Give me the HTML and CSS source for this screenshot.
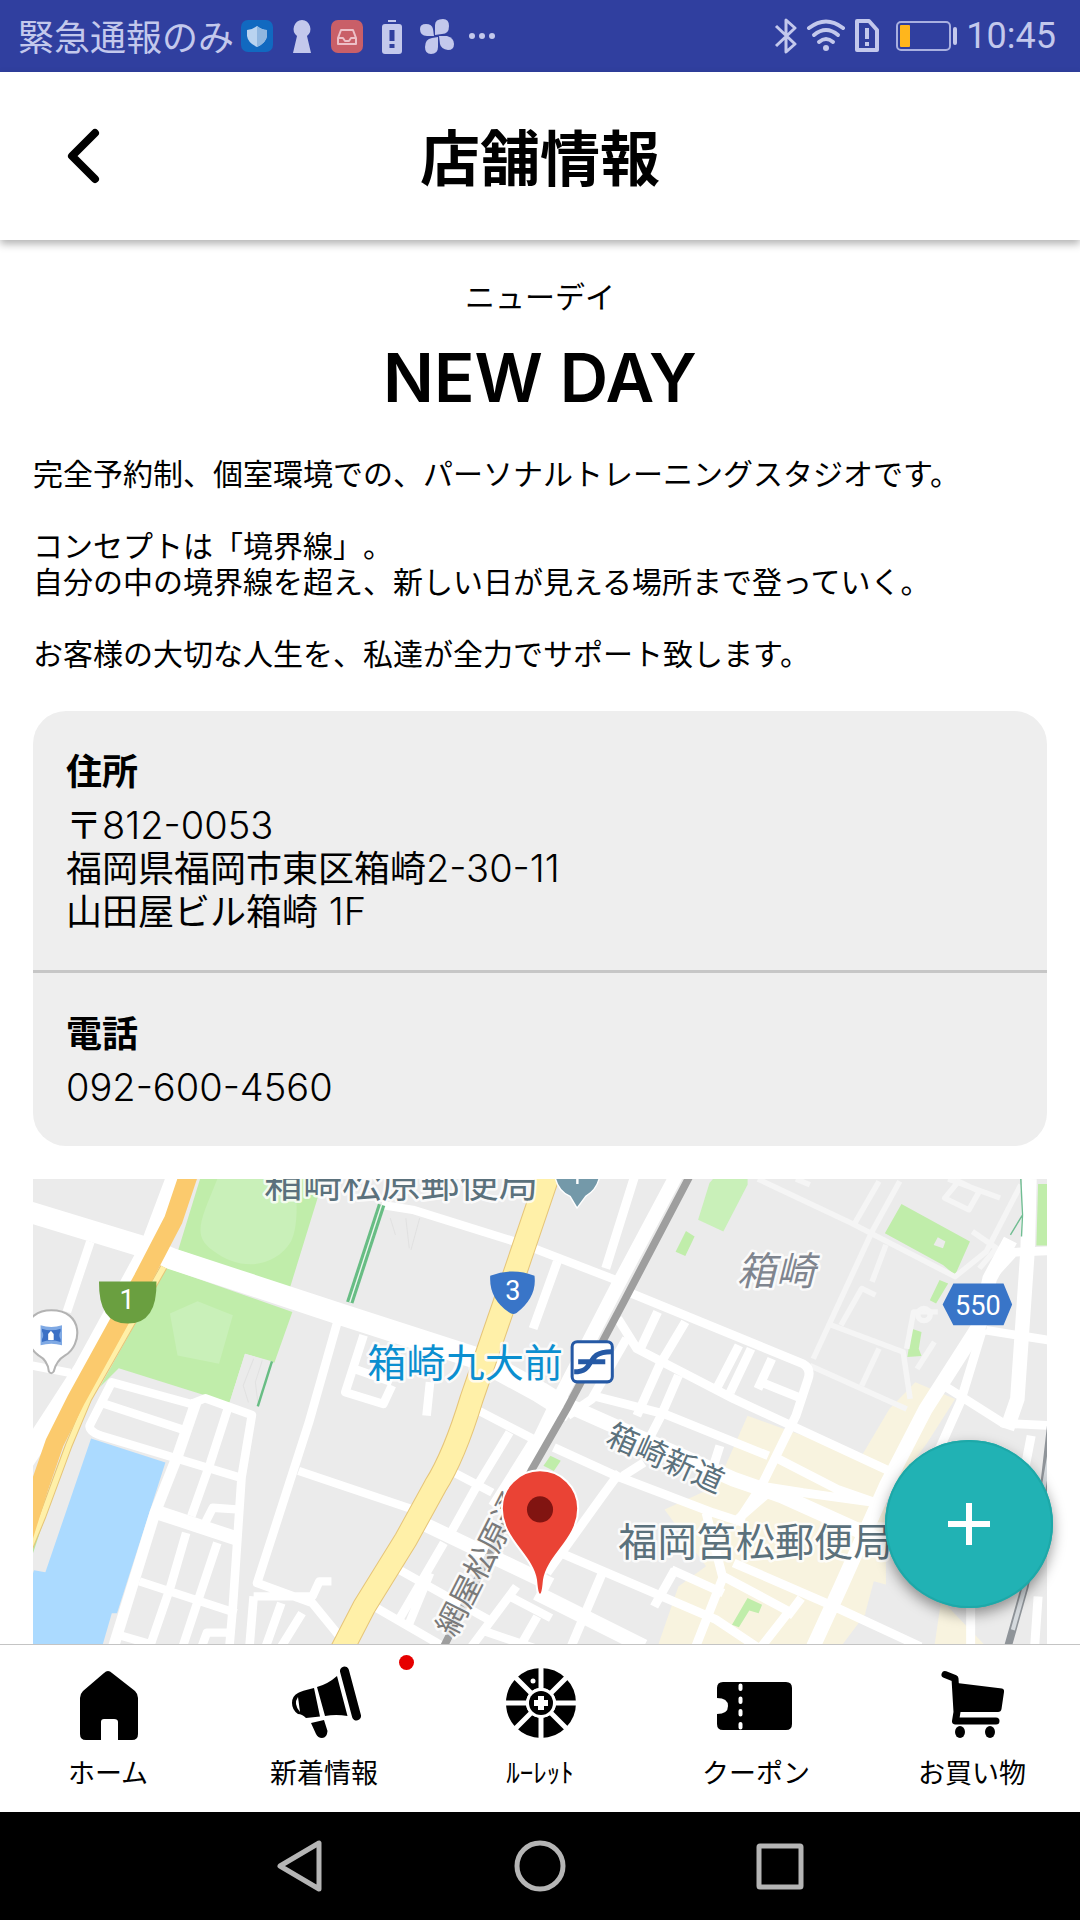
FILE: index.html
```html
<!DOCTYPE html>
<html lang="ja">
<head>
<meta charset="utf-8">
<meta name="viewport" content="width=device-width, initial-scale=1">
<title>店舗情報</title>
<link rel="stylesheet" href="styles.css">
</head>
<body>
<div class="app">
  <div class="status">
    <div class="status-group status-left">
      <span class="carrier">緊急通報のみ</span>
      <svg width="36" height="36" viewBox="0 0 36 36" aria-hidden="true"><rect x="2" y="2" width="32" height="32" rx="7" fill="#1169c0"/><path d="M18 8Q23 12 28 12V18Q27 25 18 29Q9 25 8 18V12Q13 12 18 8Z" fill="#b9d3f0"/><path d="M18 8Q23 12 28 12V18Q27 25 18 29Z" fill="#8fb6e0"/></svg>
      <svg width="36" height="36" viewBox="0 0 36 36" aria-hidden="true"><path d="M18 2A9 9 0 0 1 23 18L27 35H9L13 18A9 9 0 0 1 18 2Z" fill="#c3c8ec"/></svg>
      <svg width="36" height="36" viewBox="0 0 36 36" aria-hidden="true"><rect x="2" y="2" width="32" height="33" rx="7" fill="#c95f68"/><path d="M12 12H24L27 20V26H9V20ZM9 20H14L16 23H20L22 20H27" fill="none" stroke="#edc0c8" stroke-width="2" stroke-linejoin="round"/></svg>
      <svg width="36" height="36" viewBox="0 0 36 36" aria-hidden="true"><path d="M14 2H22V4H14Z" fill="#c3c8ec"/><rect x="8" y="6" width="20" height="30" rx="3" fill="#c3c8ec"/><path d="M18 12V23M18 26V30" stroke="#303f9f" stroke-width="5"/></svg>
      <svg width="36" height="36" viewBox="0 0 36 36" aria-hidden="true"><g fill="#c3c8ec"><path d="M16 17V7Q16 1 24 1Q30 1 30 8Q30 16 23 16Z"/><path d="M20 18H28Q35 20 35 26Q35 32 29 32Q22 31 21 26Z"/><path d="M19 19V29Q19 36 12 36Q6 36 6 29Q6 21 13 20Z"/><path d="M15 18H8Q1 18 1 11Q1 6 7 6Q13 6 14 11Z"/></g></svg>
      <svg width="36" height="36" viewBox="0 0 36 36" aria-hidden="true"><g fill="#c3c8ec"><circle cx="8" cy="18" r="3"/><circle cx="18" cy="18" r="3"/><circle cx="28" cy="18" r="3"/></g></svg>
    </div>
    <div class="status-group status-right">
      <svg width="24" height="36" viewBox="0 0 24 36" aria-hidden="true"><path d="M2 8L21 26L12 34V2L21 10L2 28" fill="none" stroke="#c3c8ec" stroke-width="3" stroke-linejoin="round"/></svg>
      <svg width="40" height="36" viewBox="0 0 40 36" aria-hidden="true"><g fill="none" stroke="#c3c8ec" stroke-width="4" stroke-linecap="round"><path d="M3 10Q20 -3 37 10"/><path d="M8 17Q20 7 32 17"/><path d="M13 24Q20 18 27 24"/></g><circle cx="20" cy="30" r="3" fill="#c3c8ec"/></svg>
      <svg width="26" height="36" viewBox="0 0 26 36" aria-hidden="true"><path d="M3 3H15L23 12V32H3Z" fill="none" stroke="#c3c8ec" stroke-width="4" stroke-linejoin="round"/><path d="M13 10V21M13 24V28" stroke="#c3c8ec" stroke-width="4"/></svg>
      <svg class="battery" width="62" height="36" viewBox="0 0 62 36" aria-hidden="true"><rect x="1" y="4" width="53" height="28" rx="4" fill="none" stroke="#a9b0e0" stroke-width="2"/><rect x="4" y="7" width="10" height="22" rx="1" fill="#ffb61c"/><rect x="57" y="9" width="4" height="18" rx="2" fill="#c3c8ec"/></svg>
      <span class="clock">10:45</span>
    </div>
  </div>

  <header class="header">
    <button class="back" type="button" aria-label="戻る"><svg width="36" height="60" viewBox="0 0 36 60" aria-hidden="true"><path d="M29 7L6 30L29 53" fill="none" stroke="#000" stroke-width="8" stroke-linecap="round" stroke-linejoin="round"/></svg></button>
    <h1>店舗情報</h1>
  </header>

  <div class="stage">
    <main class="content">
      <p class="kana">ニューデイ</p>
      <h2 class="name">NEW DAY</h2>
      <p class="about">完全予約制、個室環境での、パーソナルトレーニングスタジオです。<br><br>コンセプトは「境界線」。<br>自分の中の境界線を超え、新しい日が見える場所まで登っていく。<br><br>お客様の大切な人生を、私達が全力でサポート致します。</p>
      <section class="card">
        <div class="info">
          <h3>住所</h3>
          <p>〒<span class="num">812-0053</span><br>福岡県福岡市東区箱崎<span class="num">2-30-11</span><br>山田屋ビル箱崎<span class="num"> 1F</span></p>
        </div>
        <div class="info">
          <h3>電話</h3>
          <p><span class="num">092-600-4560</span></p>
        </div>
      </section>
      <div class="map">
        <svg viewBox="33 1181 1014 463" preserveAspectRatio="xMidYMin slice" role="img" aria-label="地図">
          <rect x="33" y="1181" width="1014" height="463" fill="#ebebeb"/>
          <g transform="translate(0 1170) scale(.3444 .3333)" fill="none" stroke-linejoin="round">
            <!-- parks and water -->
            <path fill="#c0edaa" d="M585 33H930L925 90L845 358L522 245ZM488 298L852 430L800 582L715 555L670 702L350 598L295 655Z"/>
            <path fill="#c9f0b9" d="M635 33C590 150 560 200 620 245C700 310 800 300 848 220C870 170 865 100 860 33ZM498 435L578 398L680 440L640 585L520 560Z"/>
            <path fill="#abdaff" d="M270 808L485 880L345 1330H330L302 1430H96V1230L105 1202L138 1208L190 1050Z"/>
            <path fill="#b5e7a2" d="M120 1048H135L96 1170Z"/>
            <g transform="translate(1568 0)">
              <path fill="#c9f0b9" d="M500 33H600V50L530 190L457 155L490 45Z"/>
              <path fill="#c0edaa" fill-rule="evenodd" d="M422 188L447 205L420 263L392 250ZM1045 108L1243 220L1200 320L1165 290L997 195ZM1150 207L1172 220L1165 240L1138 230ZM1155 335L1180 345L1145 405L1127 395ZM1075 480L1103 490L1095 540L1103 562L1062 565Z"/>
              <path fill="#f8f3df" d="M600 740L720 785L930 860L1010 720L1085 640L1200 690L1120 820L1000 990V1250L870 1430H340L400 1250L480 1190L360 1020L510 950ZM1160 1290L1290 1430H1120Z"/>
              <path fill="#ebebeb" d="M965 1235L1160 1290L1140 1430L940 1330Z"/>
            </g>
            <!-- minor paths -->
            <g stroke="#f5f5f5" stroke-width="16" transform="translate(1568 0)">
              <path d="M630 33L900 165L1200 325L1290 250L1390 50M1040 40L960 190L790 570M740 33L780 50M910 165L980 40M1180 33L1330 90M1170 90L1210 40L1270 70L1240 125ZM830 465L1050 550L1070 690M780 590L1060 720M980 540L930 650M870 470L930 360L970 380M1000 230L960 340M1250 190L1320 240L1270 300M1060 540L1080 430L1150 430M1090 600L1140 520"/>
              <circle cx="1110" cy="438" r="18"/>
            </g>
            <g stroke="#e1e1e1" stroke-width="3"><path d="M1135 150L1150 200M1180 150L1190 240M1220 150L1195 245"/></g>
            <path fill="#ebebeb" d="M715 555L795 578L752 715L670 702Z"/>
            <path stroke="#e1e1e1" stroke-width="3" d="M740 570L710 650L725 700M765 575L745 640L752 700"/>
            <!-- streets, west -->
            <g stroke="#fff" stroke-width="25">
              <path stroke-width="64" d="M80 128L420 235L500 270L1000 440L1390 570L1568 670L1660 730"/>
              <path stroke-width="60" d="M520 20L440 240L250 600L150 760L60 900"/>
              <path d="M268 220L200 430M96 590L210 612M1110 110L1200 125L1495 220M1550 240L1805 342M985 450L900 760L750 1240L910 1300L985 1395M870 905L1200 1020M740 1280H910L930 1235H965M1058 500L1005 670L1115 705L1140 650M1030 600L1140 640M1250 640L1240 740"/>
              <path d="M700 925L300 800Q258 785 268 765L330 640L560 705L600 688L735 738L705 925L680 1310L670 1430M310 705L545 785"/>
              <path stroke-width="32" d="M575 695L520 860L455 1030L335 1430"/>
              <path d="M665 720L615 880L560 1040M545 1090L500 1250L440 1430M635 1120L580 1290L535 1430M410 1235L690 1330M350 1395L450 1425M600 1060L622 1015L690 1020M590 1430L605 1388H670M740 1280L728 1430M820 1300L775 1430M880 1330L820 1430"/>
              <path stroke-width="42" d="M465 1030L700 1110M1225 1060L1600 1245"/>
              <path d="M1390 725L1568 820M1310 905L1430 970M1160 1200L1420 1350M1080 1305L1280 1425M1480 790L1380 960L1310 1090M1545 820L1430 1010M1290 1120L1160 1350M1250 1210L1190 1360M1500 1250L1370 1430M1480 1280L1600 1345M1410 1385L1568 1440M1560 1340L1510 1430"/>
            </g>
            <!-- streets, east -->
            <g transform="translate(1568 0)" stroke="#fff" stroke-width="26">
              <path stroke-width="40" d="M395 20L225 350L40 720L-90 1000"/>
              <path d="M275 20L190 300M50 280L-20 480M265 375L760 585Q785 600 775 630L740 740L640 950L570 1060M225 450L280 540L560 690L1030 915M340 430L290 540M420 460L345 590L280 740M575 530L510 660M610 540L550 670M670 570L630 660M640 640L760 690M250 510L150 690L80 740M400 620L350 740L290 860M150 680L360 735L660 860"/>
              <path stroke-width="42" d="M1360 215L1300 330L1270 470L1115 720L1000 950L870 1250L790 1430M1415 33L1410 240L1380 690L1350 780"/>
              <path d="M1480 247L1370 252L1310 320M1290 485L1480 516M1280 480L1215 700L1150 850M1160 645L1340 763L1480 770M690 870L860 960L970 1000M640 950L760 970L970 1000M40 835L220 920L500 1030L590 1060M230 910L180 980L20 1210M560 1060L660 970M60 1150L510 1350L640 1440M530 1220L450 1430M390 1200L330 1310M180 1210L90 1430M380 1200L530 1270M530 1220L720 1325L640 1430M755 1285L715 1340M560 1180L850 1310L1100 1430M480 1030L530 1230M1245 1300V1430M1440 1280L1430 1430M1420 800L1390 960M300 880L240 920M520 830L480 960"/>
              <path stroke-width="44" d="M60 700L560 930L700 980L1000 1120M-10 1270L300 1430"/>
            </g>
            <path fill="#c0edaa" d="M3008 48H3040V232H3003ZM2168 1285L2210 1305L2200 1330L2173 1322L2143 1372L2123 1365ZM1598 860L1628 875L1608 905L1578 890Z"/>
            <path stroke="#70bd92" stroke-width="4" d="M2958 33L2963 140L2928 200M2963 140L2960 205"/>
            <!-- highways -->
            <path stroke="#e6c579" stroke-width="22" d="M480 296L262 690L205 830L130 1040L90 1140"/>
            <path stroke="#fff0a8" stroke-width="16" d="M480 296L262 690L205 830L130 1040L90 1140"/>
            <path stroke="#fbca6d" stroke-width="54" d="M552 20L508 155L420 330L228 690L165 820L118 960L76 1100"/>
            <path stroke="#e6c579" stroke-width="70" d="M1592 20L1500 300L1400 600L1370 690Q1320 860 1265 950L1180 1110L1060 1310L995 1440"/>
            <path stroke="#fff0a8" stroke-width="64" d="M1592 20L1500 300L1400 600L1370 690Q1320 860 1265 950L1180 1110L1060 1310L995 1440"/>
            <path stroke="#68bd84" stroke-width="22" d="M1110 110L1018 402"/><path stroke="#ecf6ef" stroke-width="4" d="M1110 110L1018 402"/>
            <path stroke="#68bd84" stroke-width="7" d="M793 578L752 712"/>
            <!-- railways -->
            <path stroke="#9e9e9e" stroke-width="22" d="M2003 20L1810 400L1645 720L1545 900L1285 1440"/>
            <path stroke="#8f9499" stroke-width="22" d="M3048 740L3025 950L2970 1250L2918 1440"/><path stroke="#d5dade" stroke-width="12" d="M3040 860L3025 950L2970 1250L2935 1380"/>
            <!-- route shields -->
            <path fill="#6a9f40" d="M293 339H459Q462 465 376 465Q291 465 293 339Z"/>
            <path fill="#3975c8" d="M1424 322Q1490 296 1552 322Q1560 385 1500 433Q1489 440 1478 431Q1420 390 1424 322ZM2763 345H2908L2933 408L2908 470H2763L2732 408Z"/>
            <!-- landmarks -->
            <path fill="#fff" stroke="#b3b3b3" stroke-width="6" d="M155 425C250 425 245 530 195 560Q170 575 162 608Q155 618 148 608Q145 575 118 560C65 520 70 425 155 425Z"/>
            <path fill="#7fa9e4" d="M124 470Q155 480 186 470V530Q155 520 124 530Z"/>
            <path fill="#3b70c5" d="M128 480Q155 490 182 480V488Q174 500 182 512V520Q155 510 128 520V512Q136 500 128 488Z"/><path fill="#fff" d="M146 514V496L154 486L162 496V514Z"/>
            <path fill="#7499a9" stroke="#fff" stroke-width="4" d="M1610 10H1742Q1740 60 1700 85L1675 120L1655 85Q1612 65 1610 10Z"/><path stroke="#fff" stroke-width="7" d="M1676 20V48"/>
          </g>
          <rect x="572" y="1343" width="40" height="40" rx="5" fill="#fff" stroke="#2559a5" stroke-width="3"/>
          <path d="M574 1373C597 1373 583 1353 611 1353M578 1363H605" fill="none" stroke="#2559a5" stroke-width="5"/>
          <g class="map-text">
            <text class="poi" x="265" y="1199">箱崎松原郵便局</text>
            <text class="station" x="368" y="1378">箱崎九大前</text>
            <text class="district" x="736" y="1287">箱崎</text>
            <text class="street" transform="translate(604 1444) rotate(24)">箱崎新道</text>
            <text class="poi" x="618" y="1556">福岡筥松郵便局</text>
            <text class="street lane" transform="translate(455 1638) rotate(-63)">網屋松原通</text>
            <g class="route"><text x="129" y="1310">1</text><text x="513" y="1301">3</text><text x="976" y="1316">550</text></g>
          </g>
          <path d="M540 1595C537 1595 537 1588 536 1580C532 1555 502 1540 502 1509A38 38 0 0 1 578 1509C578 1540 548 1555 544 1580C543 1588 543 1595 540 1595Z" fill="#ea4335" stroke="#fff" stroke-width="2"/>
          <circle cx="540" cy="1510" r="13" fill="#811411"/>
        </svg>
      </div>
    </main>
    <button class="fab" type="button" aria-label="追加"><svg width="44" height="44" viewBox="0 0 44 44" aria-hidden="true"><path d="M22 1V43M1 22H43" stroke="#fff" stroke-width="6"/></svg></button>
  </div>

  <nav class="tabs">
    <a class="tab" href="#home"><svg width="80" height="76" viewBox="0 0 80 76" aria-hidden="true"><path d="M36 7Q40 3 44 7L67 25Q70 28 70 32V68Q70 74 64 74H50V56Q50 53 46 53H36Q33 53 33 56V74H18Q12 74 12 68V32Q12 28 15 25Z"/></svg><span>ホーム</span></a>
    <a class="tab" href="#news"><svg width="80" height="76" viewBox="0 0 80 76" aria-hidden="true"><path d="M60.500 5L72.500 50" stroke="#000" stroke-width="9" stroke-linecap="round"/><path d="M33 21Q44 18 53 10L63.500 50Q52 48 41 50ZM30 22L36 50.500L22 52Q18 48 14 48Q8 44 8 37Q8 30 14 27Q17 25 30 22ZM27 57L40 54L43.500 65Q43 72 38 72Q34 72 32 68Z"/><path d="M14 31Q9 38 16 46Z" fill="#fff"/></svg><span>新着情報</span><i class="badge"></i></a>
    <a class="tab" href="#roulette"><svg width="80" height="76" viewBox="0 0 80 76" aria-hidden="true"><circle cx="41" cy="37" r="25" fill="none" stroke="#000" stroke-width="20"/><path d="M41 1V73M5 37H77M15.500 11.500L66.500 62.500M66.500 11.500L15.500 62.500" stroke="#fff" stroke-width="5"/><circle cx="41" cy="37" r="15" fill="#fff"/><circle cx="41" cy="37" r="12"/><path d="M41 30V44M34 37H48" stroke="#fff" stroke-width="6"/><circle cx="33" cy="15" r="2.500" fill="#fff"/></svg><span>ﾙｰﾚｯﾄ</span></a>
    <a class="tab" href="#coupon"><svg width="80" height="76" viewBox="0 0 80 76" aria-hidden="true"><path d="M7 16H70Q76 16 76 22V58Q76 64 70 64H7Q1 64 1 58V48Q12 48 12 40Q12 32 1 32V22Q1 16 7 16Z"/><path d="M24.500 19.500V23M24.500 32.500V36M24.500 45V48.500M24.500 58V61.500" stroke="#fff" stroke-width="4" stroke-linecap="round"/></svg><span>クーポン</span></a>
    <a class="tab" href="#shop"><svg width="80" height="76" viewBox="0 0 80 76" aria-hidden="true"><path d="M13 8.500L23 12.500L25 46L23.500 55H64" fill="none" stroke="#000" stroke-width="7" stroke-linecap="round" stroke-linejoin="round"/><path d="M25 17L70 22.500Q72.500 23 72 26L69.500 43Q69 46 66 46H25Z"/><ellipse cx="28" cy="66" rx="5" ry="6"/><ellipse cx="58" cy="66" rx="5" ry="6"/></svg><span>お買い物</span></a>
  </nav>

  <div class="system">
    <button type="button" aria-label="前へ"><svg width="54" height="54" viewBox="0 0 54 54" aria-hidden="true"><path d="M46 4V50L7 27Z"/></svg></button>
    <button type="button" aria-label="ホーム画面"><svg width="54" height="54" viewBox="0 0 54 54" aria-hidden="true"><circle cx="27" cy="27" r="23"/></svg></button>
    <button type="button" aria-label="履歴"><svg width="54" height="54" viewBox="0 0 54 54" aria-hidden="true"><rect x="6" y="7" width="42" height="41" rx="1"/></svg></button>
  </div>
</div>
</body>
</html>
```
FILE: styles.css
```css
* { box-sizing: border-box; }

body {
  margin: 0;
  background: #fff;
  color: #000;
  font-family: "Noto Sans CJK JP", sans-serif;
  text-spacing-trim: space-all;
}

h1, h2, h3, p { margin: 0; }

button {
  padding: 0;
  border: 0;
  background: none;
  cursor: pointer;
}

svg { display: block; }

.app {
  display: flex;
  flex-direction: column;
  min-height: 100vh;
}

.status {
  display: flex;
  justify-content: space-between;
  align-items: center;
  height: 72px;
  padding: 0 24px 0 18px;
  background: #303f9f;
  color: #c3c8ec;
}

.status-group {
  display: flex;
  align-items: center;
  gap: 8px;
}

.status-left { gap: 9px; }

.carrier {
  margin-right: -4px;
  padding-bottom: 2px;
  font-size: 36px;
  line-height: 40px;
}

.battery { margin-left: 8px; }

.clock {
  font-family: Roboto, sans-serif;
  font-size: 36px;
}

.header {
  position: relative;
  z-index: 1;
  display: grid;
  grid-template-columns: 168px 1fr 168px;
  align-items: center;
  height: 168px;
  background: #fff;
  box-shadow: 0 4px 8px rgba(0, 0, 0, 0.3);
}

.back {
  display: grid;
  place-items: center;
  height: 168px;
}

h1 {
  padding-bottom: 2px;
  font-size: 60px;
  font-weight: 700;
  line-height: 84px;
  text-align: center;
}

.stage {
  position: relative;
  display: flex;
  flex: 1;
}

.content {
  display: flex;
  flex: 1;
  flex-direction: column;
  min-width: 0;
  padding: 37px 33px 0;
}

.kana {
  font-size: 30px;
  line-height: 36px;
  text-align: center;
}

.name {
  margin: 25px 0 36px;
  font-family: Inter, sans-serif;
  font-size: 67px;
  font-weight: 600;
  line-height: 80px;
  text-align: center;
}

.about {
  margin-bottom: 41px;
  font-size: 30px;
  line-height: 36px;
}

.card {
  margin-bottom: 33px;
  border-radius: 33px;
  background: #eee;
}

.info {
  padding: 37px 33px 39px;
  font-size: 36px;
  line-height: 43px;
}

.info + .info { border-top: 3px solid #c6c6c6; }

.info h3 {
  margin-bottom: 11px;
  font-size: 36px;
  font-weight: 700;
}

.num {
  font-family: Inter, sans-serif;
  font-size: 38px;
  font-weight: 300;
  line-height: 36px;
}

.map {
  display: flex;
  flex: 1 0 463px;
  min-height: 0;
}

.map svg {
  width: 100%;
  height: 100%;
}

.map-text {
  font-size: 39px;
  stroke: #fff;
  stroke-opacity: 0.8;
  stroke-width: 5px;
  stroke-linejoin: round;
  paint-order: stroke;
}

.poi { fill: #5b717c; }
.station { fill: #0b8fd0; }

.district {
  fill: #7f858f;
  font-style: italic;
}

.street {
  fill: #5b717c;
  font-size: 31px;
}

.lane { fill: #7a7a7a; }

.route {
  fill: #fff;
  stroke: none;
  font-family: Roboto, sans-serif;
  font-size: 27px;
  text-anchor: middle;
}

.fab {
  position: absolute;
  right: 27px;
  bottom: 36px;
  display: grid;
  place-items: center;
  width: 168px;
  height: 168px;
  border-radius: 50%;
  background: #21b2b4;
  box-shadow: 0 6px 14px rgba(0, 0, 0, 0.4), inset 0 0 0 2px #1da8a8;
}

.tabs {
  display: grid;
  grid-template-columns: repeat(5, 1fr);
  border-top: 1px solid #c4c4c4;
  background: #fff;
}

.tab {
  position: relative;
  display: flex;
  flex-direction: column;
  align-items: center;
  gap: 10px;
  padding: 21px 0 20px;
  color: #000;
  font-size: 27px;
  line-height: 40px;
  text-decoration: none;
}

.badge {
  position: absolute;
  top: 10px;
  right: 18px;
  width: 15px;
  height: 15px;
  border-radius: 50%;
  background: #e60000;
}

.system {
  display: flex;
  justify-content: center;
  align-items: center;
  gap: 186px;
  height: 108px;
  background: #000;
}

.system svg {
  fill: none;
  stroke: #b5b5b5;
  stroke-width: 5px;
  stroke-linejoin: round;
}
```
